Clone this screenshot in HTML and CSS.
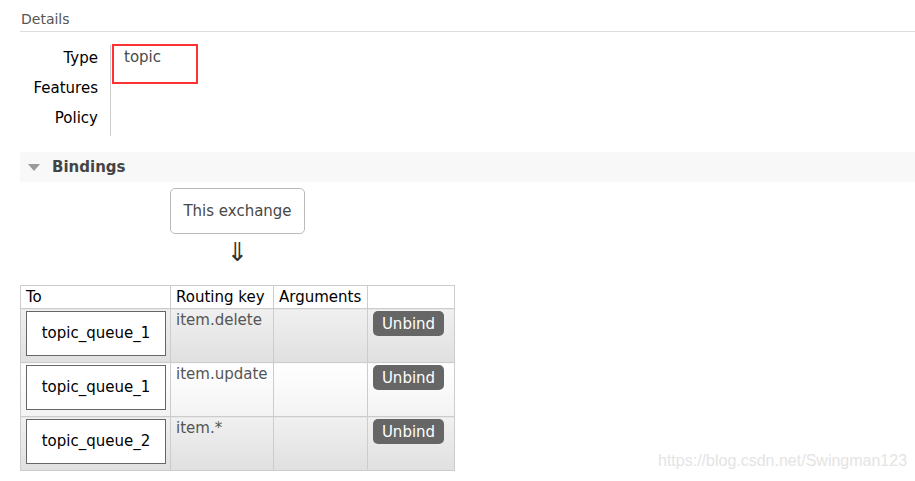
FILE: index.html
```html
<!DOCTYPE html>
<html lang="en">
<head>
    <meta charset="UTF-8">
    <title>Exchange: topic</title>
    <link rel="stylesheet" href="styles.css">
</head>
<body>

    <!-- Details -->
    <div class="section">
        <h3 class="section-title">Details</h3>
        <div class="details">
            <div class="labels">
                <div>Type</div>
                <div>Features</div>
                <div>Policy</div>
            </div>
            <div class="values">
                <div class="type-box">topic</div>
            </div>
        </div>
    </div>

    <!-- Bindings -->
    <div class="section">
        <h2 class="toggle"><span class="triangle"></span>Bindings</h2>
        <div class="bindings">
            <div class="source-col">
                <div class="exchange-box">This exchange</div>
                <div class="arrow">&#8659;</div>
            </div>
            <table class="bind-table">
                <colgroup>
                    <col class="col-to">
                    <col class="col-key">
                    <col class="col-args">
                    <col class="col-act">
                </colgroup>
                <thead>
                    <tr>
                        <th>To</th>
                        <th>Routing key</th>
                        <th>Arguments</th>
                        <th></th>
                    </tr>
                </thead>
                <tbody>
                    <tr class="alt1">
                        <td><div class="queue-box">topic_queue_1</div></td>
                        <td class="key">item.delete</td>
                        <td></td>
                        <td><button class="btn-unbind">Unbind</button></td>
                    </tr>
                    <tr class="alt2">
                        <td><div class="queue-box">topic_queue_1</div></td>
                        <td class="key">item.update</td>
                        <td></td>
                        <td><button class="btn-unbind">Unbind</button></td>
                    </tr>
                    <tr class="alt1">
                        <td><div class="queue-box">topic_queue_2</div></td>
                        <td class="key">item.*</td>
                        <td></td>
                        <td><button class="btn-unbind">Unbind</button></td>
                    </tr>
                </tbody>
            </table>
        </div>
    </div>

    <div class="watermark">https://blog.csdn.net/Swingman123</div>

</body>
</html>
```

FILE: styles.css
```css
body {
    margin: 0;
    padding: 0 0 0 20px;
    font-family: "DejaVu Sans", Verdana, sans-serif;
    font-size: 15px;
    color: #484848;
    background: #fff;
    overflow: hidden;
}

/* details block */
.section-title {
    margin: 0;
    padding: 10px 0 3px 1px;
    font-size: 14px;
    line-height: 18px;
    font-weight: normal;
    color: #555;
    border-bottom: 1px solid #ddd;
}
.details { display: flex; padding-top: 13px; }
.labels {
    width: 78px;
    text-align: right;
    color: #000;
    line-height: 30px;
    margin-top: -2px;
}
.values {
    margin-left: 12px;
    border-left: 1px solid #ccc;
    height: 91px;
    padding-left: 1px;
}
.type-box {
    width: 72px;
    height: 33px;
    border: 2px solid #f33;
    padding: 3px 0 0 10px;
    line-height: 17px;
    margin-top: -1px;
    color: #484848;
}

/* bindings */
.toggle {
    margin: 16px 0 0;
    height: 30px;
    line-height: 30px;
    background: #f8f8f8;
    font-size: 15px;
    font-weight: bold;
    color: #444;
    display: flex;
    align-items: center;
}
.triangle {
    width: 0;
    height: 0;
    border-left: 6px solid transparent;
    border-right: 6px solid transparent;
    border-top: 7px solid #999;
    margin: 0 12px 0 8px;
}
.bindings { padding-top: 6px; }
.source-col {
    width: 135px;
    margin-left: 150px;
    text-align: center;
}
.exchange-box {
    border: 1px solid #bbb;
    border-radius: 5px;
    height: 44px;
    line-height: 44px;
    color: #484848;
}
.arrow {
    font-size: 26px;
    line-height: 26px;
    color: #333;
    padding: 5px 0 20px;
}

.bind-table {
    border-collapse: collapse;
    table-layout: fixed;
    width: 434px;
}
.col-to { width: 150px; }
.col-key { width: 103px; }
.col-args { width: 94px; }
.col-act { width: 87px; }
.bind-table th, .bind-table td {
    border: 1px solid #ccc;
    padding: 0;
    vertical-align: top;
}
.bind-table th {
    height: 22px;
    line-height: 22px;
    font-weight: normal;
    text-align: left;
    color: #000;
    padding: 0 5px;
}
.bind-table td { height: 51px; }
.bind-table td:first-child { padding: 2px 4px 0 5px; }
.alt1 td { background: linear-gradient(#f0f0f0, #e0e0e0); }
.alt2 td { background: linear-gradient(#fff, #f3f3f3); }
.key { padding: 2px 5px 0 !important; color: #555; }
.queue-box {
    border: 1px solid #666;
    background: #fff;
    height: 43px;
    line-height: 43px;
    text-align: center;
    color: #000;
}
.btn-unbind {
    margin: 2px 0 0 5px;
    background: #666;
    color: #fff;
    border: none;
    border-radius: 5px;
    font-family: "DejaVu Sans", Verdana, sans-serif;
    font-size: 15px;
    width: 71px;
    height: 25px;
    padding: 0;
    cursor: pointer;
}

.watermark {
    position: absolute;
    left: 658px;
    top: 452px;
    font-family: "Liberation Sans", Arial, sans-serif;
    font-size: 16px;
    color: #e4e4e4;
}
```
